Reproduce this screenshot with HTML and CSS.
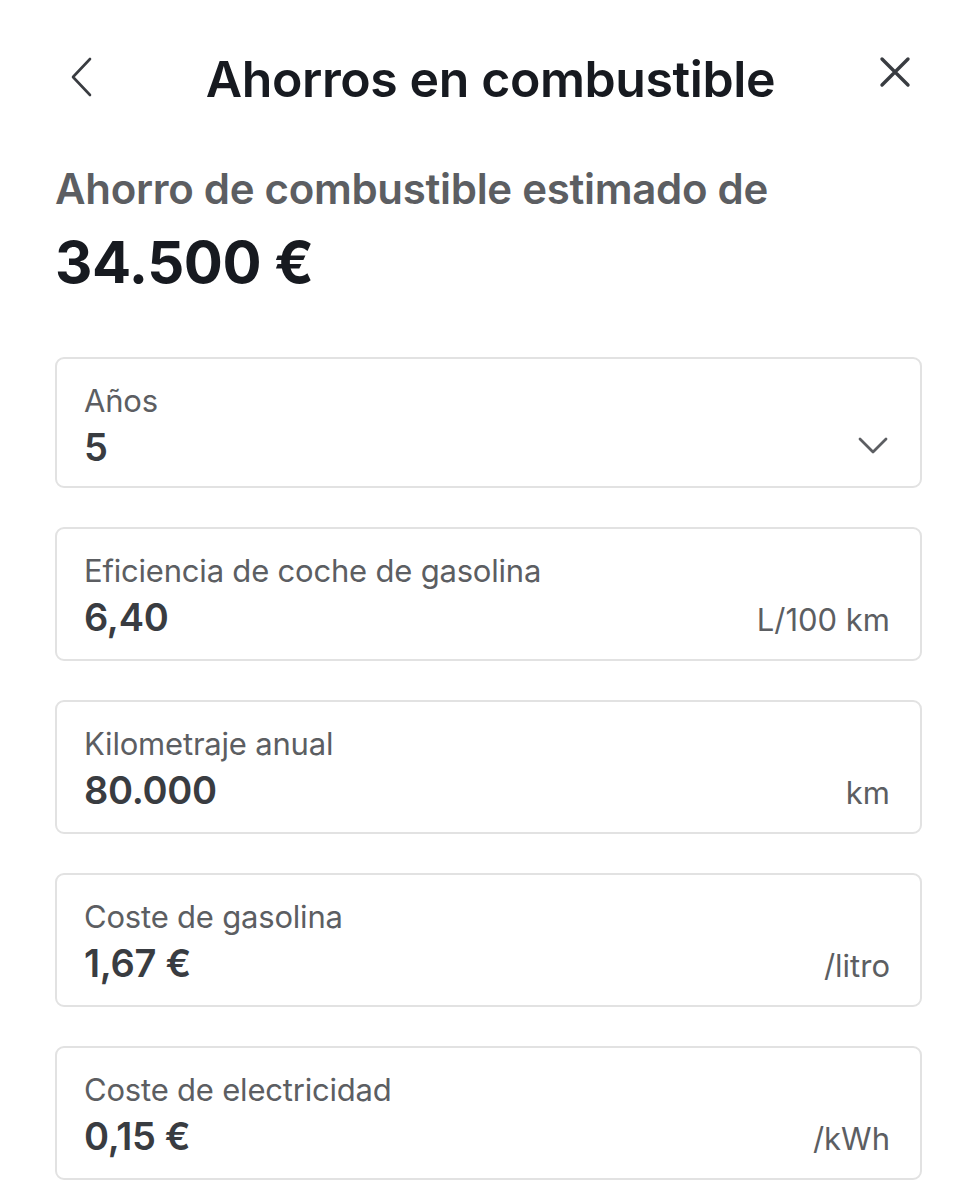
FILE: index.html
```html
<!DOCTYPE html>
<html lang="es">
<head>
  <meta charset="UTF-8" />
  <meta name="viewport" content="width=device-width, initial-scale=1" />
  <title>Ahorros en combustible</title>
  <link rel="stylesheet" href="styles.css">
</head>
<body>
  <header class="topbar">
    <button class="icon-btn back-btn" aria-label="Atrás">
      <svg width="24" height="40" viewBox="0 0 24 40" fill="none" stroke="#393c41" stroke-width="2.6" stroke-linecap="round" stroke-linejoin="round"><path d="M20 2 L3 20 L20 38"/></svg>
    </button>
    <h1>Ahorros en combustible</h1>
    <button class="icon-btn close-btn" aria-label="Cerrar">
      <svg width="32" height="32" viewBox="0 0 32 32" fill="none" stroke="#393c41" stroke-width="3.4" stroke-linecap="round"><path d="M3 3 L29 29 M29 3 L3 29"/></svg>
    </button>
  </header>

  <section class="summary">
    <div class="summary-label">Ahorro de combustible estimado de</div>
    <div class="summary-value">34.500 €</div>
  </section>

  <div class="fields">
    <div class="field field-select">
      <div class="field-label">Años</div>
      <div class="field-row">
        <span class="field-value">5</span>
        <svg class="chevron" width="30" height="17" viewBox="0 0 30 17" fill="none" stroke="#5c5e62" stroke-width="2.8" stroke-linecap="round" stroke-linejoin="round"><path d="M2 2 L15 15 L28 2"/></svg>
      </div>
    </div>

    <div class="field">
      <div class="field-label">Eficiencia de coche de gasolina</div>
      <div class="field-row">
        <span class="field-value">6,40</span>
        <span class="field-unit">L/100 km</span>
      </div>
    </div>

    <div class="field">
      <div class="field-label">Kilometraje anual</div>
      <div class="field-row">
        <span class="field-value">80.000</span>
        <span class="field-unit">km</span>
      </div>
    </div>

    <div class="field">
      <div class="field-label">Coste de gasolina</div>
      <div class="field-row">
        <span class="field-value">1,67 €</span>
        <span class="field-unit">/litro</span>
      </div>
    </div>

    <div class="field">
      <div class="field-label">Coste de electricidad</div>
      <div class="field-row">
        <span class="field-value">0,15 €</span>
        <span class="field-unit">/kWh</span>
      </div>
    </div>
  </div>
</body>
</html>
```

FILE: styles.css
```css
body {
  margin: 0;
  padding: 0 55px;
  background: #ffffff;
  font-family: Inter, "Noto Sans", sans-serif;
  color: #171a20;
}
.topbar {
  display: grid;
  grid-template-columns: 1fr auto 1fr;
  align-items: start;
  margin-top: 49px;
  padding: 0 11px 0 15px;
}
.topbar h1 {
  margin: 0;
  font-size: 50px;
  line-height: 60px;
  font-weight: 600;
  letter-spacing: -0.4px;
  color: #171a20;
}
.icon-btn {
  background: none;
  border: none;
  padding: 0;
  display: flex;
  cursor: pointer;
}
.back-btn {
  justify-self: start;
  margin-top: 8px;
}
.close-btn {
  justify-self: end;
  margin-top: 7px;
}
.summary {
  margin-top: 55px;
}
.summary-label {
  font-size: 42px;
  font-weight: 600;
  color: #5c5e62;
  letter-spacing: -0.3px;
  line-height: 50px;
}
.summary-value {
  margin-top: 14px;
  font-size: 58px;
  font-weight: 700;
  color: #171a20;
  letter-spacing: -0.5px;
  line-height: 68px;
}
.fields {
  margin-top: 61px;
  display: flex;
  flex-direction: column;
  gap: 39px;
}
.field {
  border: 2px solid #e2e2e2;
  border-radius: 9px;
  height: 134px;
  box-sizing: border-box;
  padding: 24px 30px 0 27px;
}
.field-select {
  height: 131px;
}
.field-label {
  font-size: 31px;
  color: #5c5e62;
  line-height: 36px;
  letter-spacing: -0.2px;
}
.field-row {
  display: flex;
  align-items: baseline;
  justify-content: space-between;
  margin-top: 5px;
  line-height: 46px;
}
.field-value {
  font-size: 38px;
  font-weight: 600;
  color: #393c41;
  letter-spacing: -0.3px;
}
.field-unit {
  font-size: 31px;
  color: #5c5e62;
}
.chevron {
  align-self: center;
  margin-top: -4px;
  margin-right: 2px;
}
```
